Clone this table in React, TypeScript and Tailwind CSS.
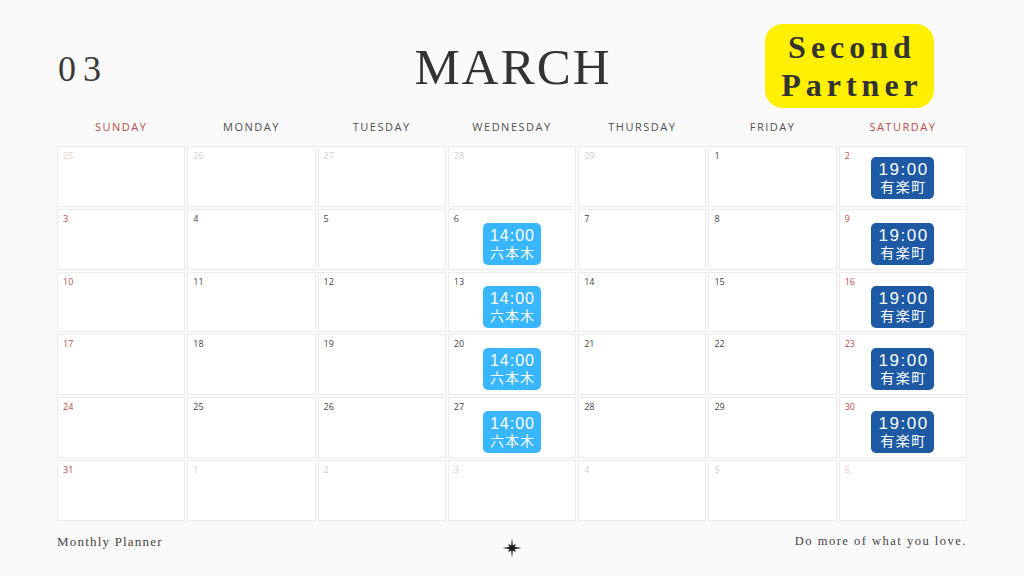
import React from "react";

type Cell = { d: number; out: boolean; badge?: "light" | "dark" };

const days = ["SUNDAY", "MONDAY", "TUESDAY", "WEDNESDAY", "THURSDAY", "FRIDAY", "SATURDAY"];

function buildWeeks(): Cell[][] {
  const nums = [
    [25, 26, 27, 28, 29, 1, 2],
    [3, 4, 5, 6, 7, 8, 9],
    [10, 11, 12, 13, 14, 15, 16],
    [17, 18, 19, 20, 21, 22, 23],
    [24, 25, 26, 27, 28, 29, 30],
    [31, 1, 2, 3, 4, 5, 6],
  ];
  return nums.map((row, r) =>
    row.map((d, c) => {
      const out = (r === 0 && c < 5) || (r === 5 && c > 0);
      let badge: Cell["badge"];
      if (c === 3 && r >= 1 && r <= 4) badge = "light";
      if (c === 6 && r <= 4) badge = "dark";
      return { d, out, badge };
    })
  );
}

function numColor(c: number, out: boolean) {
  const weekend = c === 0 || c === 6;
  if (weekend) return out ? "text-[#eccaca]" : "text-[#b94c4c]";
  return out ? "text-[#cfcfcf]" : "text-[#444444]";
}

function Star() {
  return (
    <svg width="22" height="22" viewBox="0 0 22 22">
      <path d="M11 1 L12 9.5 L20.5 11 L12 12.5 L11 21 L10 12.5 L1.5 11 L10 9.5 Z" fill="#222" />
      <path d="M11 5.5 L12.6 9.4 L16.5 11 L12.6 12.6 L11 16.5 L9.4 12.6 L5.5 11 L9.4 9.4 Z" fill="#222" transform="rotate(45 11 11)" />
      <circle cx="11" cy="11" r="2.2" fill="#222" />
    </svg>
  );
}

const badgeFont = '"Liberation Sans", "Noto Sans CJK JP", sans-serif';

export default function App() {
  const weeks = buildWeeks();
  return (
    <div className="w-[1024px] h-[576px] bg-[#fafafa] overflow-hidden flex flex-col px-[57px]">
      {/* top */}
      <div className="grid grid-cols-3 items-center pt-[24px] h-[108px]">
        <div
          className="text-[36px] text-[#3a3a3a] tracking-[7px] pl-[1px] pt-[6px]"
          style={{ fontFamily: '"Liberation Serif", serif' }}
        >
          03
        </div>
        <div className="flex justify-center">
          <div
            className="text-[51px] leading-none text-[#333] tracking-[2px] pl-[2px] pt-[2px]"
            style={{ fontFamily: '"Liberation Serif", serif' }}
          >
            MARCH
          </div>
        </div>
        <div className="flex justify-end pr-[33px]">
          <div
            className="w-[169px] h-[84px] bg-[#fff000] rounded-[18px] flex flex-col items-center justify-center text-[#333] font-bold text-[32px] leading-[38px] tracking-[5px] pl-[5px]"
            style={{ fontFamily: '"Liberation Serif", serif' }}
          >
            <span>Second</span>
            <span>Partner</span>
          </div>
        </div>
      </div>

      {/* day headers */}
      <div className="grid grid-cols-7 gap-[2px] mt-[11px] h-[16px]">
        {days.map((d, i) => (
          <div
            key={d}
            className={`flex items-center justify-center text-[11px] tracking-[1.5px] font-medium ${
              i === 0 || i === 6 ? "text-[#b94c4c]" : "text-[#505050]"
            }`}
            style={{ fontFamily: '"Open Sans", sans-serif' }}
          >
            {d}
          </div>
        ))}
      </div>

      {/* grid */}
      <div className="grid grid-cols-7 grid-rows-6 gap-[2px] mt-[11px] h-[375px]">
        {weeks.map((row, r) =>
          row.map((cell, c) => (
            <div
              key={`${r}-${c}`}
              className="bg-white border border-[#ececec] flex flex-col pt-[4px] px-[5px]"
            >
              <span
                className={`text-[9px] leading-[10px] ${numColor(c, cell.out)}`}
                style={{ fontFamily: '"Open Sans", sans-serif' }}
              >
                {cell.d}
              </span>
              {cell.badge === "light" && (
                <div
                  className="self-center mt-[-1px] w-[58px] h-[42px] rounded-[5px] bg-[#38b6ff] text-white flex flex-col items-center justify-center"
                  style={{ fontFamily: badgeFont }}
                >
                  <span className="text-[16px] leading-[19px] tracking-[1px] pl-[1px]">14:00</span>
                  <span className="text-[14px] leading-[17px] tracking-[1px] pl-[1px]">六本木</span>
                </div>
              )}
              {cell.badge === "dark" && (
                <div
                  className={`self-center ${r === 0 ? "mt-[-4px]" : "mt-[-1px]"} w-[63px] h-[42px] rounded-[5px] bg-[#1d5aa3] text-white flex flex-col items-center justify-center`}
                  style={{ fontFamily: badgeFont }}
                >
                  <span className="text-[17px] leading-[19px] tracking-[1.5px] pl-[1.5px]">19:00</span>
                  <span className="text-[14px] leading-[17px] tracking-[1.5px] pl-[1.5px]">有楽町</span>
                </div>
              )}
            </div>
          ))
        )}
      </div>

      {/* footer */}
      <div className="grid grid-cols-3 items-start mt-[11px]">
        <div
          className="text-[13px] tracking-[1.2px] text-[#444]"
          style={{ fontFamily: '"Liberation Serif", serif' }}
        >
          Monthly Planner
        </div>
        <div className="flex justify-center pt-[5px]">
          <Star />
        </div>
        <div
          className="text-right text-[12.5px] tracking-[1.5px] text-[#444]"
          style={{ fontFamily: '"Liberation Serif", serif' }}
        >
          Do more of what you love.
        </div>
      </div>
    </div>
  );
}
